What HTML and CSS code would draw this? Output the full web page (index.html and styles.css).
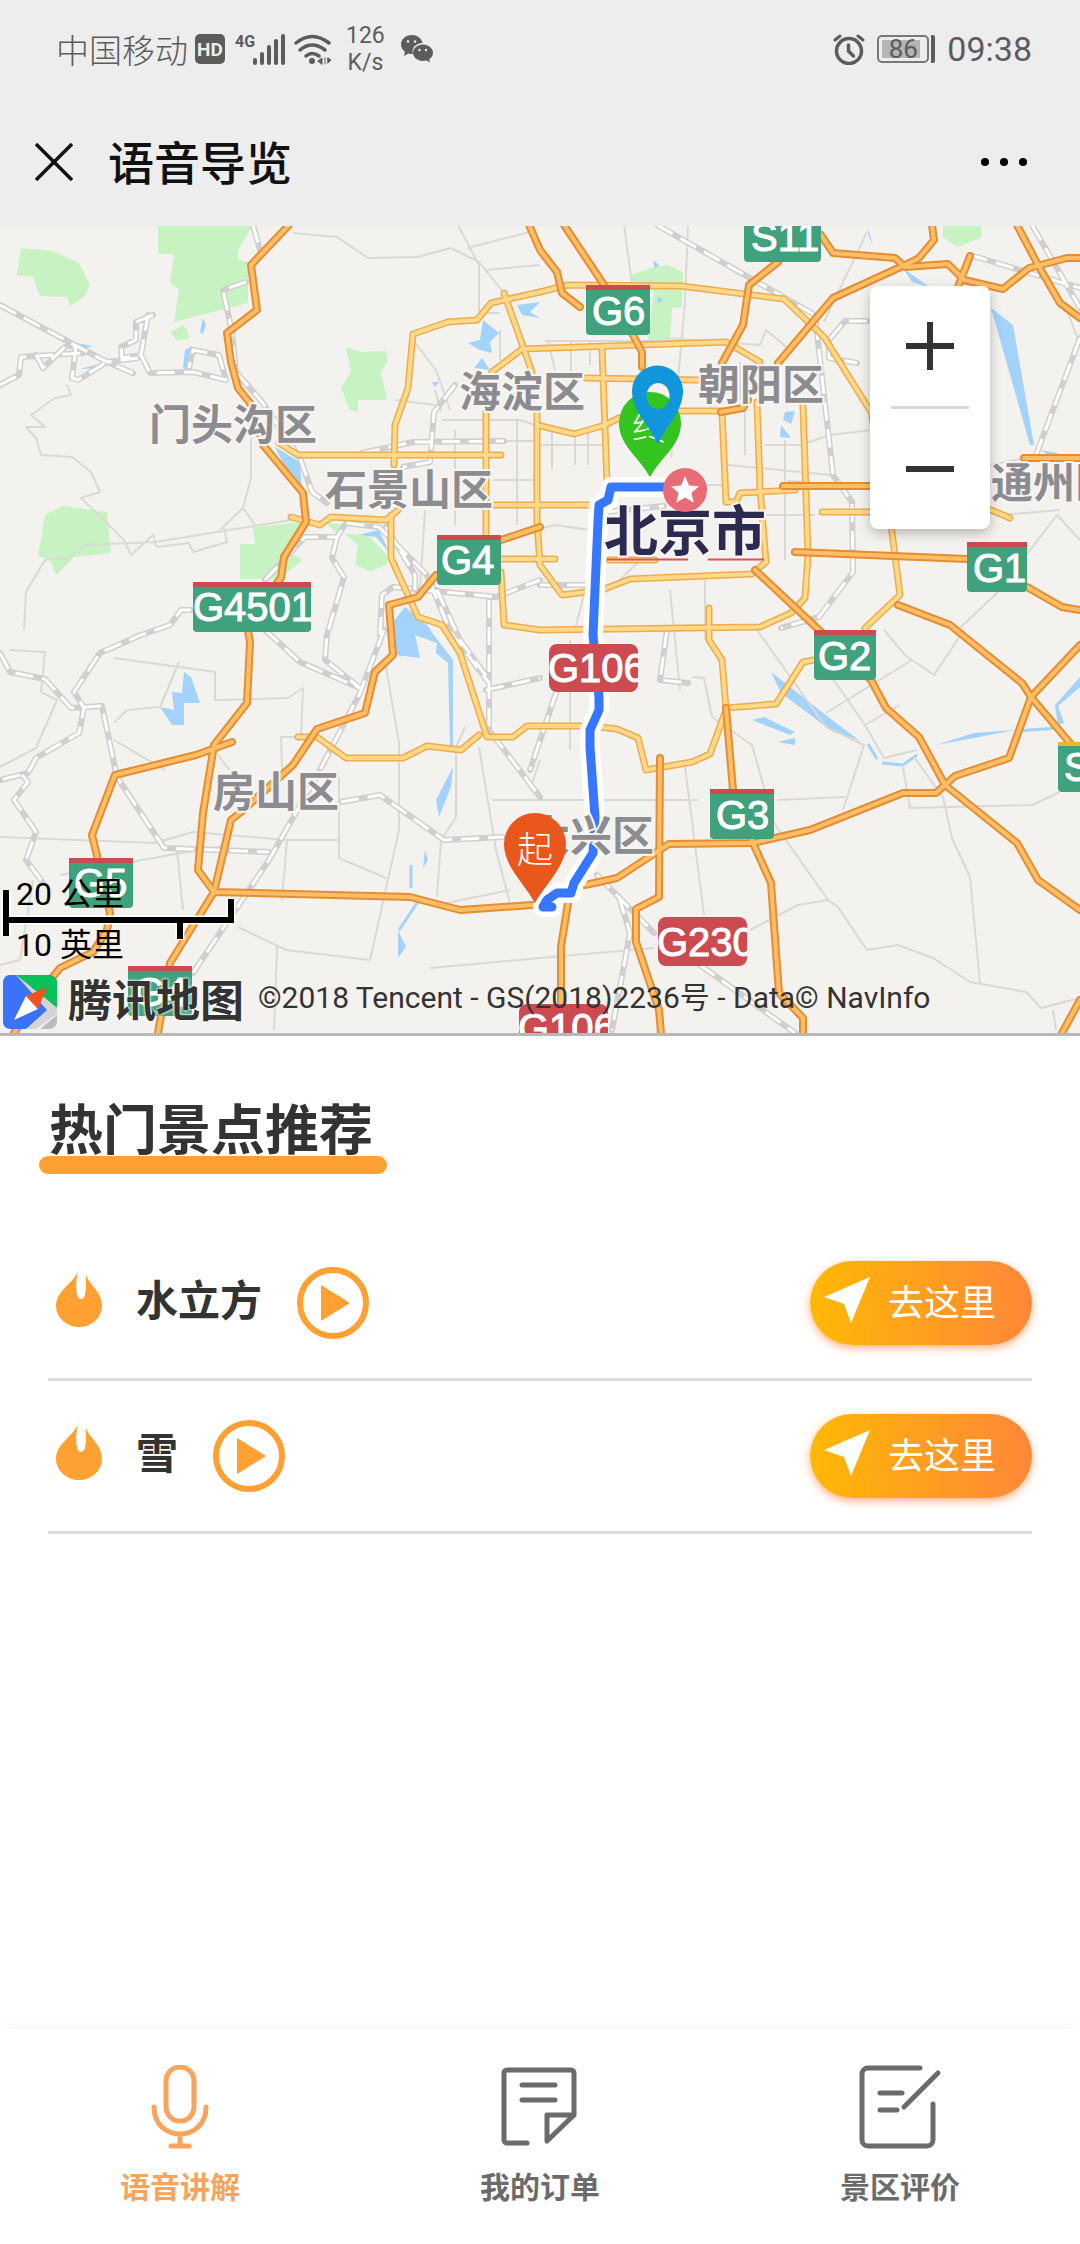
FILE: index.html
```html
<!DOCTYPE html>
<html lang="zh-CN">
<head>
  <meta charset="UTF-8" />
  <meta name="viewport" content="width=device-width, initial-scale=1.0"/>
  <title>语音导览</title>
  <link rel="stylesheet" href="styles.css">
</head>
<body>
  <div class="statusbar">
    <span class="carrier">中国移动</span>
    <svg class="hd" width="30" height="30" viewBox="0 0 30 30">
      <rect width="30" height="30" rx="5" fill="#5c5c5c"/>
      <text x="15" y="22" text-anchor="middle" font-size="19" font-weight="700" fill="#ededed">HD</text>
    </svg>
    <svg class="signal" width="52" height="32" viewBox="0 0 52 32">
      <text x="0" y="14" font-size="16" font-weight="700" fill="#5c5c5c">4G</text>
      <path d="M20 27v3M27 21v9M34 14v16M41 8v22M48 3v27" stroke="#5c5c5c" stroke-width="4" stroke-linecap="round"/>
    </svg>
    <svg class="wifi" width="38" height="32" viewBox="0 0 38 32" fill="none" stroke="#5c5c5c" stroke-width="3.500" stroke-linecap="round">
      <path d="M2 10Q18-3 35 10M6 17q12-10 25 0M12 23q6-5 13 0"/>
      <circle cx="18" cy="28" r="3" fill="#5c5c5c" stroke="none"/>
      <path d="M24 28l4-3v6zM31 25v6M34 25l3 2-3 3z" fill="#5c5c5c" stroke-width="1"/>
    </svg>
    <span class="speed">126<br>K/s</span>
    <svg class="wechat" width="32" height="28" viewBox="0 0 32 28" fill="#5c5c5c">
      <path d="M11 0C5 0 0 4 0 9.500c0 3 1.500 5.500 4 7.300L3 21l4.500-2.500c1.500.4 3 .6 4.500.5C10 13 15 8 21.500 8 20.500 3 16 0 11 0z"/>
      <path d="M22 9.500c-5.500 0-10 3.700-10 8.300S16.500 26 22 26c1.200 0 2.300-.1 3.400-.4L29 27.500l-.8-3.200c2.200-1.600 3.800-3.900 3.800-6.500 0-4.600-4.500-8.300-10-8.300z"/>
      <g fill="#ededed"><circle cx="7" cy="6.500" r="1.300"/><circle cx="14" cy="6.500" r="1.300"/><circle cx="18.500" cy="15" r="1.200"/><circle cx="25" cy="15" r="1.200"/></g>
    </svg>
    <div class="status-right">
      <svg width="32" height="32" viewBox="0 0 32 32" fill="none" stroke="#5c5c5c" stroke-linecap="round">
        <circle cx="16" cy="18" r="12.500" stroke-width="3.500"/>
        <path d="M15.500 12v6l5 5" stroke-width="3.500"/>
        <path d="M2 7l5-4M30 7l-5-4" stroke-width="3"/>
      </svg>
      <span class="battery"><span class="battery-box">86</span></span>
      <span class="clock">09:38</span>
    </div>
  </div>

  <header class="titlebar">
    <button class="icon-btn" aria-label="关闭">
      <svg width="38" height="38" viewBox="0 0 38 38"><path d="M1 1l36 36M37 1L1 37" stroke="#111" stroke-width="3.500"/></svg>
    </button>
    <h1>语音导览</h1>
    <button class="icon-btn more" aria-label="更多">
      <svg width="48" height="10" viewBox="0 0 48 10"><circle cx="5" cy="5" r="4"/><circle cx="24" cy="5" r="4"/><circle cx="43" cy="5" r="4"/></svg>
    </button>
  </header>

  <section class="map">
    <svg class="map-canvas" viewBox="0 226 1080 807">
      <defs>
        <path id="rail" d="M0 305L69 342 107 362 138 358M133 373L107 362M0 385L19 375 21 357 83 353M36 355L43 368 67 345 76 347 72 378 78 380 107 362M153 315L136 322V340L121 347 122 358 141 355 148 315M141 355L150 373 193 372 226 380 219 355 193 350 189 368M253 225L260 250M246 282L223 290 232 332 236 372 262 402 300 458 312 492 327 503M265 580L305 537H337L346 523 379 527 427 575 451 633 489 683M337 537L332 558 344 577 327 635 325 660 360 688M386 527L415 575V590M191 610H181L170 625 141 635 100 653 74 692 84 708 79 733 36 758 28 773 0 780M0 653L10 672 45 679 71 708 102 706 117 777 164 848 269 852M22 775L28 782 14 800 36 832 26 860 43 883M384 630L360 693 320 770 269 860 193 973M265 630L300 662 360 688M341 802L380 795 444 840 504 837M380 635L382 595 393 587 496 597 540 580M489 600V730L540 797M486 690L540 678M657 225L815 315 833 475 852 502 853 572 819 617 781 628M867 321H845L829 340V358L857 363M970 255L1080 288M1032 225L1080 308M1080 338L1036 455M597 875L654 933M700 965L795 1033M619 897L630 933 612 1030M362 453L413 442 504 441M455 385L434 412 430 462 403 467M667 630L660 680 688 683M557 690L530 770M540 585H585M605 512L664 506M790 483L833 487M437 590L460 640 489 680"/>
        <g id="rings">
          <path d="M279 443L298 455H501M540 292L491 303 477 320 448 322 413 334 408 388 395 425 394 465M291 517L320 525 331 517 386 520 398 510M391 515V558L418 617 442 625 460 653 487 737H513L527 726H590L617 729 638 738 646 770 692 762 710 754 726 710"/>
          <path d="M540 292L568 285 681 286 784 299 824 337 871 412 891 525 900 595 865 628M504 293L532 372M492 372L522 349 726 342 760 362M757 402L760 488 766 562 752 574 630 579 602 590 562 595 540 565 537 520V412M486 412V538M602 348L607 482M586 378L698 380"/>
          <path d="M537 425L574 434 605 425 619 418 678 411H722L726 502H736L740 493 795 490M492 505H592M501 559H555M609 560H655M803 405L808 555 805 598 791 613 760 627 540 630 504 625 501 572M709 608V640L722 660 726 708 776 704 803 662 814 660M822 512H871M991 510L1010 518M298 737H317L346 758H403L427 746 461 750 479 735"/>
        </g>
        <g id="highways">
          <path d="M289 225L251 265 257 310 227 333 231 362 238 388 250 403 263 445 303 493 306 522 284 557 281 578 246 620 250 642 247 703 214 745 203 813 198 870 214 892 170 963 158 1033M232 742L196 755 115 775 92 835 98 860 110 913 107 930 93 952 60 968 48 983 14 1033M214 892L410 897 460 910 532 905M585 885L617 878 669 844 753 843 810 830 903 793H936L955 776 1009 758 1031 697 1080 645"/>
          <path d="M214 892L231 820 241 812 293 765 317 729 365 713 375 672 393 655 389 605 418 597 436 575M501 540L540 527M529 225L540 250 557 272 562 293 580 307M564 225L604 285 633 335 642 352V367M778 262L749 285 743 325 722 363M778 363L833 298 905 265 919 258 934 240 932 225M821 235L833 253 895 258 905 267 948 264 964 280 1003 289 1029 268 1067 258H1080M970 256L958 287M1017 225L1038 265 1060 303 1080 318"/>
          <path d="M783 486H871M1024 458H1080M795 552L967 559M1027 587L1062 607 1080 610M755 570L819 630 871 680 886 708 919 737 945 785 1017 843 1038 880 1080 910M898 605L950 625 1022 683 1031 697 1070 743M726 708L733 790 753 843 771 883 779 993 803 1018V1033M660 758L659 897 636 909V942L659 1010 661 1033M568 903L561 947V1033M1080 1000L1062 1033M721 412L743 408 748 400"/>
        </g>
      </defs>

      <rect y="226" width="1080" height="807" fill="#f3f2ee"/>

      <g class="parks">
        <path d="M21 248L53 251 79 263 90 285 84 297 70 306 67 297 40 296 33 277 17 275z"/>
        <path d="M158 225H253L238 250V260L248 262V303L174 322 179 290 170 282 174 254H158zM170 332L184 325 190 338 177 341z"/>
        <path d="M346 347L362 352 386 351 388 360 381 372 387 400H358V412L350 410 341 388 351 372z"/>
        <path d="M62 506L107 512 111 553 74 557 56 575 50 560 38 556 45 515z"/>
        <path d="M253 527L303 522 290 553 303 560 279 579H240V544H255zM344 533L370 537 387 555V565L370 571 355 565 358 545zM325 522L345 525 338 535z"/>
        <path d="M631 275L654 267 667 265 683 272 682 307 672 308 670 340H648L654 290 631 284zM943 225H981V238L957 247 943 237z"/>
      </g>

      <g class="water">
        <path d="M200 332L203 318 206 325 203 334zM183 368L185 350 192 346 187 370zM69 342L93 346 78 350zM80 369L107 362 100 368zM275 447L300 462 302 493 290 477zM150 370L165 373 152 376z"/>
        <path d="M483 320L499 333 490 342 492 353 480 350 468 343 480 340zM482 358L490 370 474 368zM517 305L540 302 530 312 540 318 522 315zM432 382h7l-4 5z"/>
        <path d="M358 535L379 530 389 552 376 537zM405 607L427 625 436 638 453 660V747H450L448 663 436 653 437 643 415 635 420 658 396 655 393 622z"/>
        <path d="M184 672L191 677 200 703H184V725H172L160 707 174 710 172 692 182 693zM453 767L451 787 439 817 436 800zM398 930L406 947 398 958zM425 850l3 10-5 8z"/>
        <path d="M991 308L1013 325 1034 445H1030zM903 268L929 287 912 282zM785 412L795 411 791 424 783 420zM781 425L791 438 780 437zM868 228l5 18-5-12zM653 260l6 5-4 4zM657 297l6 2-4 5z"/>
        <path d="M771 672L836 723 859 740 833 732 781 693zM752 720L764 717 795 732 790 735zM778 742L795 738V745zM936 745L974 733 1015 730 974 738zM1080 677L1055 705 1058 725 1064 723 1058 706 1080 687zM1040 450l18 3-2 6z"/>
        <path d="M868 744L877 759M882 763L903 765 917 755M1015 731L1058 728M417 903L399 930M411 865V888M230 350L236 372" class="stream"/>
      </g>

      <g class="lanes">
        <path d="M293 233L337 237 368 258 417 257 451 248 479 262 503 292M458 225L479 265V312M467 248L530 232M486 270L540 265M67 385L71 395 55 398 31 415 45 427H26L36 438 41 455 72 457 91 472 100 492 81 498 124 540 131 555 153 535 157 547 189 543 193 552 227 542 224 528M251 438V478L243 508 220 530M243 508L255 525M24 630L26 592 45 560 69 558 86 545 155 542 291 520"/>
        <path d="M0 837L155 843 193 832 286 840H339M339 777V858L386 878M386 667L399 743V830L370 960 286 950 238 927M114 658L215 672V700L288 698 303 688 301 737H281L282 770M179 662L160 707 127 710 114 723M10 650L45 652 41 692 57 700 36 748 0 767M430 968L540 958 654 948M277 947L274 1030M441 840L437 897M479 747L496 850 510 903M465 727L456 747V817L441 840M492 800H698M114 740L165 770M282 900L287 840M60 875L170 855 230 845M177 850L183 910M437 905L510 890M218 755L233 775M0 965L20 960 33 880"/>
        <path d="M685 767L704 915M692 677L704 678 712 717 752 745 774 823 828 900 838 907 867 950 898 945 933 958 970 982 1026 992 1041 1008 1080 998M750 930L798 905 828 900M914 757L943 797 952 838 970 877 980 983M903 767L910 808 1032 805 1060 792M757 630L826 727 864 745 843 810M845 797L778 800M829 673L865 725 884 758 917 750M884 630L905 655 934 675 964 630M912 660L826 713M865 725L900 705M1053 1010L1056 1030"/>
        <path d="M624 225L633 292M688 225L685 302 671 458M867 232L824 322M998 592L960 628M998 592L1057 515 1080 540M1000 515L1060 510M545 341H720M590 340V365M571 340V390M548 340L555 370M455 430V525M517 420V525M493 480H540M493 441H540M442 420H520L535 425M435 390L441 412M413 340L436 370 450 410M395 400L435 405M500 313H480M500 330V360M665 338L760 345 766 330 790 350M740 362V400M745 410V455M765 445H800L830 435 871 430M728 465L830 475M785 440V560M610 485H728M540 445H605M552 430V470M575 430V465M588 430V465M670 590L680 690M705 580V640M585 590L575 630M640 560L620 580M425 510L420 590M990 465L1040 455M1065 305L1080 345M535 530L555 525 590 530M765 515H815M570 640V750M600 640V640M540 760L530 790"/>
      </g>

      <use href="#rail" class="rail-edge"/>
      <use href="#rail" class="rail-tie"/>
      <use href="#rings" class="ring-edge"/>
      <use href="#rings" class="ring-fill"/>
      <use href="#highways" class="highway-edge"/>
      <use href="#highways" class="highway-fill"/>

      <defs>
        <path id="route" d="M664 487H611L608 500 599 505 598 522 593 635 599 697V710L590 730V747L595 817 593 853 574 883 571 893H557L547 900 543 907H552"/>
      </defs>
      <use href="#route" class="route-edge"/>
      <use href="#route" class="route-fill"/>

      <g class="district">
        <text x="149" y="440">门头沟区</text>
        <text x="459" y="407">海淀区</text>
        <text x="698" y="400">朝阳区</text>
        <text x="325" y="505">石景山区</text>
        <text x="991" y="498">通州区</text>
        <text x="213" y="807">房山区</text>
        <text x="528" y="851">大兴区</text>
      </g>
      <path d="M607 559.500H688M708 559.500H764" stroke="#d9535a" stroke-width="2"/>
      <text class="city" x="604" y="551">北京市</text>
      <circle cx="685" cy="490" r="22" fill="#e86b75"/>
      <path d="M685 476l4 9.500 10 .8-7.600 6.600 2.400 9.900-8.800-5.300-8.800 5.300 2.400-9.900-7.600-6.600 10-.8z" fill="#fff"/>

      <g class="shields">
        <svg x="586" y="285" width="64" height="50"><rect width="64" height="50" rx="4"/><path d="M0 0h64v5H0z"/><text x="6" y="40">G6</text></svg>
        <svg x="437" y="535" width="64" height="50"><rect width="64" height="50" rx="4"/><path d="M0 0h64v5H0z"/><text x="4" y="39">G4</text></svg>
        <svg x="193" y="582" width="118" height="50"><rect width="118" height="50" rx="4"/><path d="M0 0h118v5H0z"/><text x="0" y="39">G4501</text></svg>
        <svg x="744" y="212" width="77" height="50"><rect width="77" height="50" rx="4"/><text x="7" y="39">S11</text></svg>
        <svg x="967" y="542" width="60" height="50"><rect width="60" height="50" rx="4"/><path d="M0 0h60v5H0z"/><text x="6" y="40">G1</text></svg>
        <svg x="814" y="630" width="62" height="50"><rect width="62" height="50" rx="4"/><path d="M0 0h62v5H0z"/><text x="4" y="40">G2</text></svg>
        <svg x="710" y="789" width="64" height="50"><rect width="64" height="50" rx="4"/><path d="M0 0h64v5H0z"/><text x="6" y="40">G3</text></svg>
        <svg x="1058" y="742" width="64" height="50"><rect width="64" height="50" rx="4"/><path class="province" d="M0 0h64v4H0z"/><text x="6" y="39">S</text></svg>
        <svg x="69" y="858" width="64" height="50"><rect width="64" height="50" rx="4"/><path d="M0 0h64v5H0z"/><text x="5" y="39">G5</text></svg>
        <svg x="128" y="966" width="64" height="50"><rect width="64" height="50" rx="4"/><path d="M0 0h64v5H0z"/><text x="6" y="40">G4</text></svg>
        <svg x="549" y="644" width="89" height="48"><rect class="national" width="89" height="48" rx="8"/><text x="-1" y="38">G106</text></svg>
        <svg x="658" y="917" width="89" height="49"><rect class="national" width="89" height="49" rx="8"/><text x="-1" y="39">G230</text></svg>
        <svg x="519" y="1004" width="89" height="49"><rect class="national" width="89" height="49" rx="8"/><text x="-1" y="38">G106</text></svg>
      </g>

      <!-- 起点 / 终点 / 当前位置 -->
      <g class="pins">
        <path d="M535 903C523 882 504 866 504 844a31 31 0 0 1 62 0C566 866 547 882 535 903z" fill="#e9571c"/>
        <text x="535" y="863">起</text>
        <path d="M650 477C638 456 619 445 619 423a31 31 0 0 1 62 0C681 445 662 456 650 477z" fill="#35c320"/>
        <text x="650" y="440">终</text>
        <path fill-rule="evenodd" d="M658 445C650 425 632 412 632 391a25 25 0 0 1 51 0C683 412 666 425 658 445zM658 383a11.500 13 0 1 0 .1 0z" fill="#1296db"/>
      </g>
    </svg>

    <div class="zoom">
      <button aria-label="放大"><svg width="48" height="48" viewBox="0 0 48 48"><path d="M0 24h48M24 0v48" stroke="#333" stroke-width="6"/></svg></button>
      <hr>
      <button aria-label="缩小"><svg width="48" height="48" viewBox="0 0 48 48"><path d="M0 24h48" stroke="#333" stroke-width="6"/></svg></button>
    </div>

    <div class="map-footer">
      <div class="scale">
        <span>20 公里</span>
        <svg width="236" height="52" viewBox="0 0 236 52" fill="none">
          <path d="M6 1v46M6 31h225M231 34V9M180 31v20" stroke="#fff" stroke-width="9"/>
          <path d="M6 1v46M6 31h225M231 34V10M180 31v19" stroke="#000" stroke-width="6"/>
        </svg>
        <span>10 英里</span>
      </div>
      <div class="credit">
        <svg width="56" height="56" viewBox="0 0 56 56">
          <path d="M14 1h33a8 8 0 0 1 8 8v25z" fill="#0bbf5b"/>
          <path d="M1 8a7 7 0 0 1 7-7h6l41 33v6L34 55h-8z" fill="#d5d5d5"/>
          <path d="M8 1h6l31 35-21 19H8a7 7 0 0 1-7-7V8a7 7 0 0 1 7-7z" fill="#3a72f8"/>
          <path d="M38 55l17-14v6a8 8 0 0 1-8 8z" fill="#bbb"/>
          <path d="M22 1h25a8 8 0 0 1 8 8v24L40 20 30 14z" fill="#0bbf5b"/>
          <path d="M12 46l12-24 12 13z" fill="#fff"/>
          <path d="M24 22l21-9-9 22z" fill="#f4511e"/>
        </svg>
        <b>腾讯地图</b>
        <span>©2018 Tencent - GS(2018)2236号 - Data© NavInfo</span>
      </div>
    </div>
  </section>

  <main class="spots">
    <h2>热门景点推荐</h2>
    <ul>
      <li>
        <svg class="fire" width="46" height="60" viewBox="0 0 46 60"><path d="M23 0C21 15 0 22 0 39a23 21 0 0 0 46 0C46 24 33 18 30 8 29 14 32 32 25 32S20 8 23 0z"/></svg>
        <h3>水立方</h3>
        <button class="play" aria-label="播放水立方">
          <svg width="72" height="72" viewBox="0 0 72 72"><circle cx="36" cy="36" r="33"/><path d="M24 18l29 18-29 18z"/></svg>
        </button>
        <button class="go">
          <svg width="46" height="46" viewBox="0 0 46 46"><path d="M0 20L46 0 27 46 20 27z"/></svg>
          去这里
        </button>
      </li>
      <li>
        <svg class="fire" width="46" height="60" viewBox="0 0 46 60"><path d="M23 0C21 15 0 22 0 39a23 21 0 0 0 46 0C46 24 33 18 30 8 29 14 32 32 25 32S20 8 23 0z"/></svg>
        <h3>雪</h3>
        <button class="play" aria-label="播放雪">
          <svg width="72" height="72" viewBox="0 0 72 72"><circle cx="36" cy="36" r="33"/><path d="M24 18l29 18-29 18z"/></svg>
        </button>
        <button class="go">
          <svg width="46" height="46" viewBox="0 0 46 46"><path d="M0 20L46 0 27 46 20 27z"/></svg>
          去这里
        </button>
      </li>
    </ul>
  </main>

  <nav class="tabbar">
    <a href="#guide" class="active">
      <svg width="84" height="84" viewBox="0 0 84 84">
        <rect x="28" y="2" width="28" height="54" rx="14"/>
        <path d="M16 42c0 36 52 36 52 0M42 70v11M33 81h18"/>
      </svg>
      语音讲解
    </a>
    <a href="#orders">
      <svg width="84" height="84" viewBox="0 0 84 84">
        <path d="M29 78H9a3 3 0 0 1-3-3V8a3 3 0 0 1 3-3h64a3 3 0 0 1 3 3v42L49 76V50h27M24 20h33M24 35h33"/>
      </svg>
      我的订单
    </a>
    <a href="#reviews">
      <svg width="84" height="84" viewBox="0 0 84 84">
        <path d="M62 3H10a6 6 0 0 0-6 6v66a6 6 0 0 0 6 6h59a6 6 0 0 0 6-6V39M80 8L46 42M22 28h22M22 45h17"/>
      </svg>
      景区评价
    </a>
  </nav>
</body>
</html>
```
FILE: styles.css
```css
* {
  box-sizing: border-box;
}
body {
  margin: 0;
  min-height: 100vh;
  display: flex;
  flex-direction: column;
  background: #fff;
  color: #333;
  font-family: Roboto, "Noto Sans CJK SC", sans-serif;
}
h1, h2, h3, ul {
  margin: 0;
  padding: 0;
}
button {
  padding: 0;
  border: none;
  background: none;
  font-family: inherit;
  cursor: pointer;
}
svg {
  display: block;
}

/* 状态栏 */
.statusbar {
  display: flex;
  align-items: center;
  height: 98px;
  padding: 0 48px 0 56px;
  background: #ededed;
  color: #5c5c5c;
}
.carrier {
  font-size: 33px;
  font-weight: 300;
}
.hd {
  margin-left: 7px;
}
.signal {
  margin-left: 10px;
}
.wifi {
  margin-left: 7px;
}
.speed {
  margin-left: 14px;
  font-size: 23px;
  line-height: 27px;
  text-align: center;
}
.wechat {
  margin-left: 16px;
}
.status-right {
  display: flex;
  align-items: center;
  gap: 12px;
  margin-left: auto;
}
.battery {
  padding-right: 2px;
  border-right: 4px solid #5c5c5c;
  border-radius: 2px;
}
.battery-box {
  display: block;
  width: 52px;
  height: 28px;
  border: 2px solid #777;
  border-radius: 5px;
  background: linear-gradient(#b5b5b5, #b5b5b5) 3px 3px / 38px 18px no-repeat;
  font-size: 26px;
  line-height: 25px;
  text-align: center;
}
.clock {
  font-size: 34px;
}

/* 标题栏 */
.titlebar {
  display: flex;
  align-items: center;
  height: 128px;
  padding: 0 52px 0 35px;
  background: #ededed;
}
.titlebar h1 {
  margin: 0 0 4px 35px;
  color: #111;
  font-size: 46px;
  font-weight: 500;
}
.more {
  margin-left: auto;
}

/* 地图 */
.map {
  position: relative;
  border-bottom: 3px solid #b8b8b8;
  overflow: hidden;
}
.map-canvas {
  width: 100%;
  height: auto;
}
.map-canvas path,
.map-canvas use {
  stroke-linejoin: round;
}
.parks {
  fill: #c6f3c1;
}
.water {
  fill: #a3d2fb;
}
.stream {
  fill: none;
  stroke: #a3d2fb;
  stroke-width: 3;
}
.lanes {
  fill: none;
  stroke: #d9d9d6;
  stroke-width: 2;
}
.rail-edge, .rail-tie,
.ring-edge, .ring-fill,
.highway-edge, .highway-fill,
.route-edge, .route-fill {
  fill: none;
  stroke-linecap: round;
}
.rail-edge {
  stroke: #cfcfcf;
  stroke-width: 6;
}
.rail-tie {
  stroke: #fff;
  stroke-width: 3;
  stroke-linecap: butt;
  stroke-dasharray: 18 9;
}
.ring-edge {
  stroke: #efab4c;
  stroke-width: 7;
}
.ring-fill {
  stroke: #ffd98a;
  stroke-width: 4;
}
.highway-edge {
  stroke: #e58d33;
  stroke-width: 8;
}
.highway-fill {
  stroke: #ffbe66;
  stroke-width: 4;
}
.route-edge {
  stroke: #fff;
  stroke-width: 20;
}
.route-fill {
  stroke: #3777ff;
  stroke-width: 9;
}
.district, .city {
  font-family: "Noto Sans CJK SC", sans-serif;
  font-weight: 700;
  paint-order: stroke;
  stroke: #f6f5f2;
  stroke-width: 4;
}
.district {
  fill: #8c8c90;
  font-size: 42px;
}
.city {
  fill: #2d2a50;
  font-size: 54px;
}
.shields {
  fill: #40a17d;
}
.shields path,
.shields .national {
  fill: #cc4b50;
}
.shields .province {
  fill: #e8b52c;
}
.shields text {
  fill: #fff;
  stroke: #fff;
  stroke-width: 1;
  font-family: "Liberation Sans", sans-serif;
  font-size: 40px;
}
.pins text {
  fill: #fff;
  font-size: 36px;
  font-weight: 300;
  text-anchor: middle;
}
.zoom {
  position: absolute;
  top: 60px;
  right: 90px;
  width: 120px;
  background: #fff;
  border-radius: 8px;
  box-shadow: 0 4px 12px rgba(0, 0, 0, 0.25);
}
.zoom button {
  display: flex;
  align-items: center;
  justify-content: center;
  width: 100%;
  height: 120px;
}
.zoom hr {
  margin: 0 21px;
  border: none;
  border-top: 3px solid #d8d8d8;
}
.map-footer {
  position: absolute;
  left: 0;
  bottom: 0;
}
.scale {
  display: flex;
  flex-direction: column;
  color: #000;
  font-size: 32px;
  line-height: 36px;
}
.scale span {
  margin-left: 16px;
}
.scale svg {
  margin: -23px 0 -14px;
}
.credit {
  display: flex;
  align-items: center;
  padding: 10px 0 2px 2px;
}
.credit b {
  margin: 0 14px 0 10px;
  font-size: 44px;
  line-height: 56px;
  text-shadow: 0 0 3px #fff, 0 0 3px #fff;
}
.credit span {
  padding-bottom: 14px;
  font-size: 30px;
}

/* 景点列表 */
.spots {
  flex: 1;
  padding: 54px 48px 0;
}
.spots h2 {
  position: relative;
  z-index: 0;
  width: fit-content;
  margin: 0 0 54px -9px;
  padding: 0 14px 0 10px;
  font-size: 54px;
  line-height: 84px;
}
.spots h2::after {
  content: "";
  position: absolute;
  z-index: -1;
  left: 0;
  right: 0;
  bottom: 0;
  height: 18px;
  border-radius: 9px;
  background: #ffa033;
}
.spots ul {
  list-style: none;
}
.spots li {
  display: flex;
  align-items: center;
  height: 153px;
  padding-left: 8px;
  border-bottom: 3px solid #dedede;
}
.fire {
  margin-bottom: 12px;
  fill: #ffa033;
}
.spots h3 {
  margin: 0 35px 12px 34px;
  font-size: 42px;
}
.play circle {
  fill: none;
  stroke: #ffa033;
  stroke-width: 6;
}
.play path {
  fill: #ffa033;
}
.go {
  display: flex;
  align-items: center;
  gap: 18px;
  width: 222px;
  height: 84px;
  margin-left: auto;
  padding: 0 0 6px 14px;
  border-radius: 42px;
  background: linear-gradient(to right, #ffb805, #ff8738);
  box-shadow: 0 3px 8px rgba(255, 120, 40, 0.6);
  color: #fff;
  font-size: 36px;
}
.go svg {
  fill: #fff;
}

/* 底部导航 */
.tabbar {
  display: flex;
  height: 215px;
  background: #fff;
  box-shadow: 0 -4px 16px rgba(0, 0, 0, 0.04);
}
.tabbar a {
  flex: 1;
  display: flex;
  flex-direction: column;
  align-items: center;
  gap: 14px;
  padding-top: 36px;
  color: #6b6b6b;
  font-size: 30px;
  font-weight: 700;
  text-decoration: none;
}
.tabbar svg {
  fill: none;
  stroke: currentColor;
  stroke-width: 5;
  stroke-linecap: round;
  stroke-linejoin: round;
}
.tabbar .active {
  color: #f9a45b;
}
```
